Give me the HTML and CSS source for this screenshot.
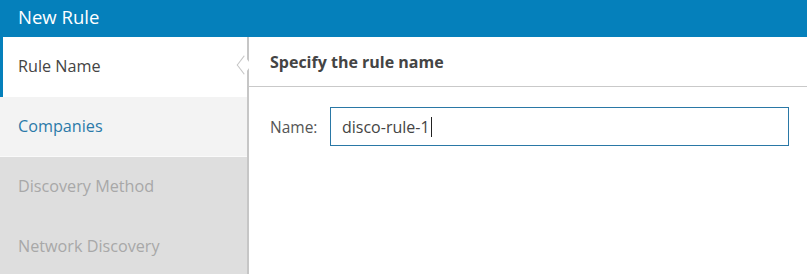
FILE: index.html
```html
<!DOCTYPE html>
<html lang="en">
<head>
    <meta charset="UTF-8">
    <meta name="viewport" content="width=device-width, initial-scale=1.0">
    <title>New Rule</title>
    <link rel="stylesheet" href="styles.css">
</head>
<body>

    <!-- Title bar -->
    <div class="titlebar">New Rule</div>

    <div class="wizard">
        <ul class="steps">
            <li class="step active">Rule Name</li>
            <li class="step next">Companies</li>
            <li class="step disabled">Discovery Method</li>
            <li class="step disabled">Network Discovery</li>
        </ul>

        <div class="panel">
            <div class="panel-head">Specify the rule name</div>
            <div class="panel-body">
                <label class="field">
                    <span class="field-label">Name:</span>
                    <span class="field-input">disco-rule-1<span class="caret"></span></span>
                </label>
            </div>
        </div>
    </div>

</body>
</html>
```

FILE: styles.css
```css
body {
    font-family: "Open Sans", Arial, sans-serif;
    margin: 0;
    padding: 0;
    background-color: #fff;
    height: 274px;
    overflow: hidden;
}

/* Title bar */
.titlebar {
    background-color: #0580bb;
    color: #fff;
    height: 37px;
    line-height: 34px;
    padding-left: 18px;
    font-size: 18.5px;
}

.wizard {
    display: flex;
    height: 237px;
}

/* Step list */
.steps {
    list-style: none;
    margin: 0;
    padding: 0;
    width: 247px;
    border-right: 2px solid #c6c6c6;
    background-color: #dedede;
}

.step {
    position: relative;
    height: 60px;
    line-height: 58px;
    padding-left: 18px;
    font-size: 16.2px;
    box-sizing: border-box;
}

.step.active {
    background-color: #fff;
    color: #444;
    border-left: 3px solid #0580bb;
    padding-left: 15px;
}

/* notch pointing at the panel */
.step.active::after {
    content: "";
    position: absolute;
    right: -3px;
    top: 22px;
    width: 11px;
    height: 11px;
    background: #fff;
    border-left: 1px solid #c6c6c6;
    border-bottom: 1px solid #c6c6c6;
    transform: rotate(45deg) skew(8deg, 8deg);
}

.step.next {
    background-color: #f3f3f3;
    color: #2b7aa9;
    border-bottom: 1px solid #fafafa;
}

.step.disabled {
    color: #a8a8a8;
}

/* Right panel */
.panel {
    flex: 1;
}

.panel-head {
    height: 49px;
    line-height: 50px;
    padding-left: 21px;
    font-size: 16px;
    font-weight: bold;
    color: #444;
    border-bottom: 1px solid #c9c9c9;
}

.panel-body {
    padding: 20px 18px 0 21px;
}

.field {
    display: flex;
    align-items: center;
}

.field-label {
    width: 60px;
    font-size: 15.5px;
    color: #555;
}

.field-input {
    display: flex;
    align-items: center;
    width: 459px;
    height: 39px;
    box-sizing: border-box;
    border: 1.5px solid #2a78a6;
    padding-left: 11px;
    font-size: 16px;
    color: #444;
}

.caret {
    display: inline-block;
    width: 1px;
    height: 20px;
    background: #222;
    margin-left: 1px;
}
```
